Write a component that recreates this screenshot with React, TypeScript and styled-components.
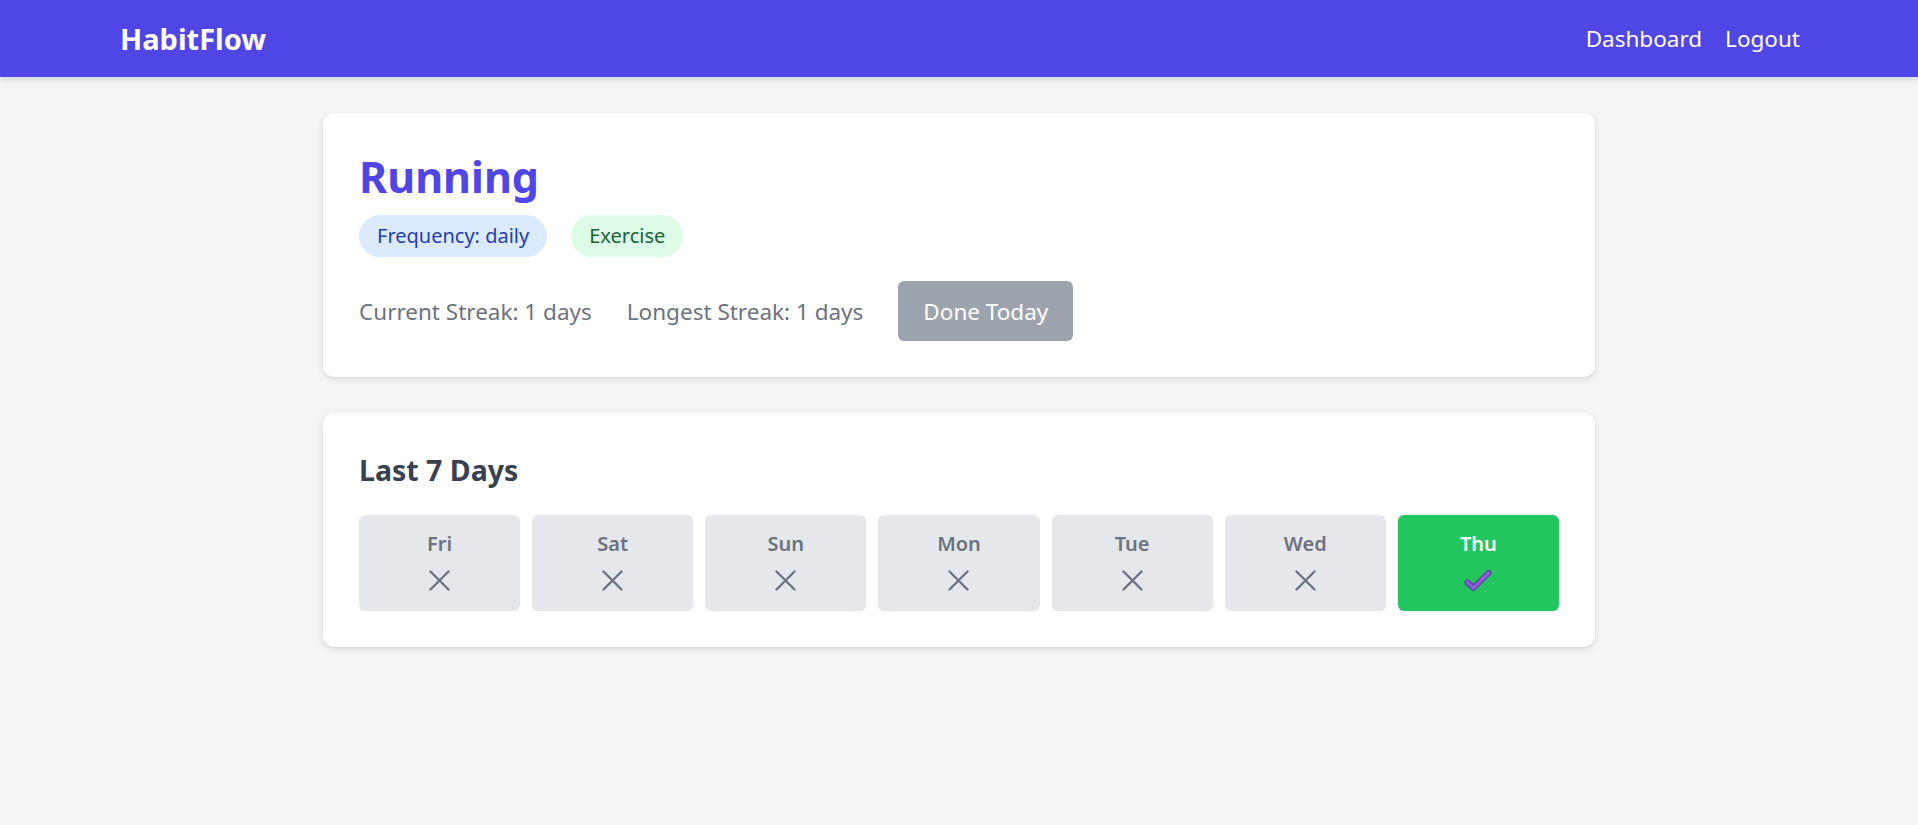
import React from 'react';
import styled, {createGlobalStyle} from "styled-components";

const GlobalStyle = createGlobalStyle`
  body {
    margin: 0;
    background: #f3f4f6;
    font-family: "Noto Sans", "Open Sans", sans-serif;
  }
`;

type Day = {
    label: string
    done: boolean
}

const days: Day[] = [
    {label: 'Fri', done: false},
    {label: 'Sat', done: false},
    {label: 'Sun', done: false},
    {label: 'Mon', done: false},
    {label: 'Tue', done: false},
    {label: 'Wed', done: false},
    {label: 'Thu', done: true},
];

function CrossIcon() {
    return (
        <svg width="21" height="21" viewBox="0 0 21 21">
            <path d="M1.5 1.5 L19.5 19.5 M19.5 1.5 L1.5 19.5" stroke="#6b7280" strokeWidth="2.4" strokeLinecap="round"/>
        </svg>
    );
}

function CheckIcon() {
    return (
        <svg width="28" height="22" viewBox="0 0 28 22">
            <path d="M3.5 13.5 L9.5 19 L24.5 4" fill="none" stroke="#5b3aa8" strokeWidth="6" strokeLinecap="round" strokeLinejoin="round"/>
            <path d="M3.5 13.5 L9.5 19 L24.5 4" fill="none" stroke="#8a5fd6" strokeWidth="3.6" strokeLinecap="round" strokeLinejoin="round"/>
        </svg>
    );
}

function App() {
    return (
        <>
            <GlobalStyle/>
            <Header>
                <Logo>HabitFlow</Logo>
                <Nav>
                    <NavLink>Dashboard</NavLink>
                    <NavLink>Logout</NavLink>
                </Nav>
            </Header>
            <Main>
                <Card>
                    <Title>Running</Title>
                    <Tags>
                        <Tag $variant="blue">Frequency: daily</Tag>
                        <Tag $variant="green">Exercise</Tag>
                    </Tags>
                    <StreakRow>
                        <StreakText>Current Streak: 1 days</StreakText>
                        <StreakText>Longest Streak: 1 days</StreakText>
                        <DoneButton>Done Today</DoneButton>
                    </StreakRow>
                </Card>
                <Card>
                    <SectionTitle>Last 7 Days</SectionTitle>
                    <DayGrid>
                        {days.map((day) => (
                            <DayTile key={day.label} $done={day.done}>
                                <DayLabel $done={day.done}>{day.label}</DayLabel>
                                <DayMark>{day.done ? <CheckIcon/> : <CrossIcon/>}</DayMark>
                            </DayTile>
                        ))}
                    </DayGrid>
                </Card>
            </Main>
        </>
    );
}

const Header = styled.header`
  display: flex;
  justify-content: space-between;
  align-items: center;
  height: 77px;
  padding: 0 118px 0 120px;
  background: #4f46e5;
  box-shadow: 0 2px 6px rgba(0, 0, 0, 0.15);
`;

const Logo = styled.div`
  color: #ffffff;
  font-size: 29px;
  font-weight: 700;
`;

const Nav = styled.nav`
  display: flex;
  align-items: center;
  gap: 23px;
`;

const NavLink = styled.a`
  color: #ffffff;
  font-size: 22.5px;
  cursor: pointer;
`;

const Main = styled.main`
  display: flex;
  flex-direction: column;
  gap: 36px;
  width: 1272px;
  margin: 36px auto;
`;

const Card = styled.section`
  background: #ffffff;
  border-radius: 11px;
  padding: 36px;
  box-shadow: 0 2px 6px rgba(0, 0, 0, 0.1), 0 1px 2px rgba(0, 0, 0, 0.06);
`;

const Title = styled.h1`
  margin: 0;
  color: #4f46e5;
  font-size: 43px;
  font-weight: 700;
  line-height: 56px;
`;

const Tags = styled.div`
  display: flex;
  gap: 24px;
  margin-top: 10px;
`;

const Tag = styled.span<{ $variant: 'blue' | 'green' }>`
  display: inline-block;
  height: 42px;
  line-height: 42px;
  padding: 0 18px;
  border-radius: 21px;
  font-size: 20px;
  background: ${p => p.$variant === 'blue' ? '#dbeafe' : '#dcfce7'};
  color: ${p => p.$variant === 'blue' ? '#1e40af' : '#166534'};
`;

const StreakRow = styled.div`
  display: flex;
  align-items: center;
  gap: 35px;
  margin-top: 24px;
`;

const StreakText = styled.span`
  color: #6b7280;
  font-size: 22.5px;
`;

const DoneButton = styled.button`
  height: 60px;
  padding: 0 25px;
  border: none;
  border-radius: 6px;
  background: #9ca3af;
  color: #ffffff;
  font-family: inherit;
  font-size: 22.5px;
  cursor: pointer;
`;

const SectionTitle = styled.h2`
  margin: 0;
  color: #374151;
  font-size: 28.5px;
  font-weight: 700;
  line-height: 42px;
`;

const DayGrid = styled.div`
  display: grid;
  grid-template-columns: repeat(7, 1fr);
  gap: 12px;
  margin-top: 24px;
`;

const DayTile = styled.div<{ $done: boolean }>`
  display: flex;
  flex-direction: column;
  align-items: center;
  height: 96px;
  box-sizing: border-box;
  padding-top: 15px;
  border-radius: 6px;
  background: ${p => p.$done ? '#22c55e' : '#e5e7eb'};
`;

const DayLabel = styled.span<{ $done: boolean }>`
  font-size: 20px;
  font-weight: 600;
  line-height: 28px;
  color: ${p => p.$done ? '#ffffff' : '#6b7280'};
`;

const DayMark = styled.div`
  display: flex;
  align-items: center;
  justify-content: center;
  height: 22px;
  margin-top: 11px;
`;

export default App;
